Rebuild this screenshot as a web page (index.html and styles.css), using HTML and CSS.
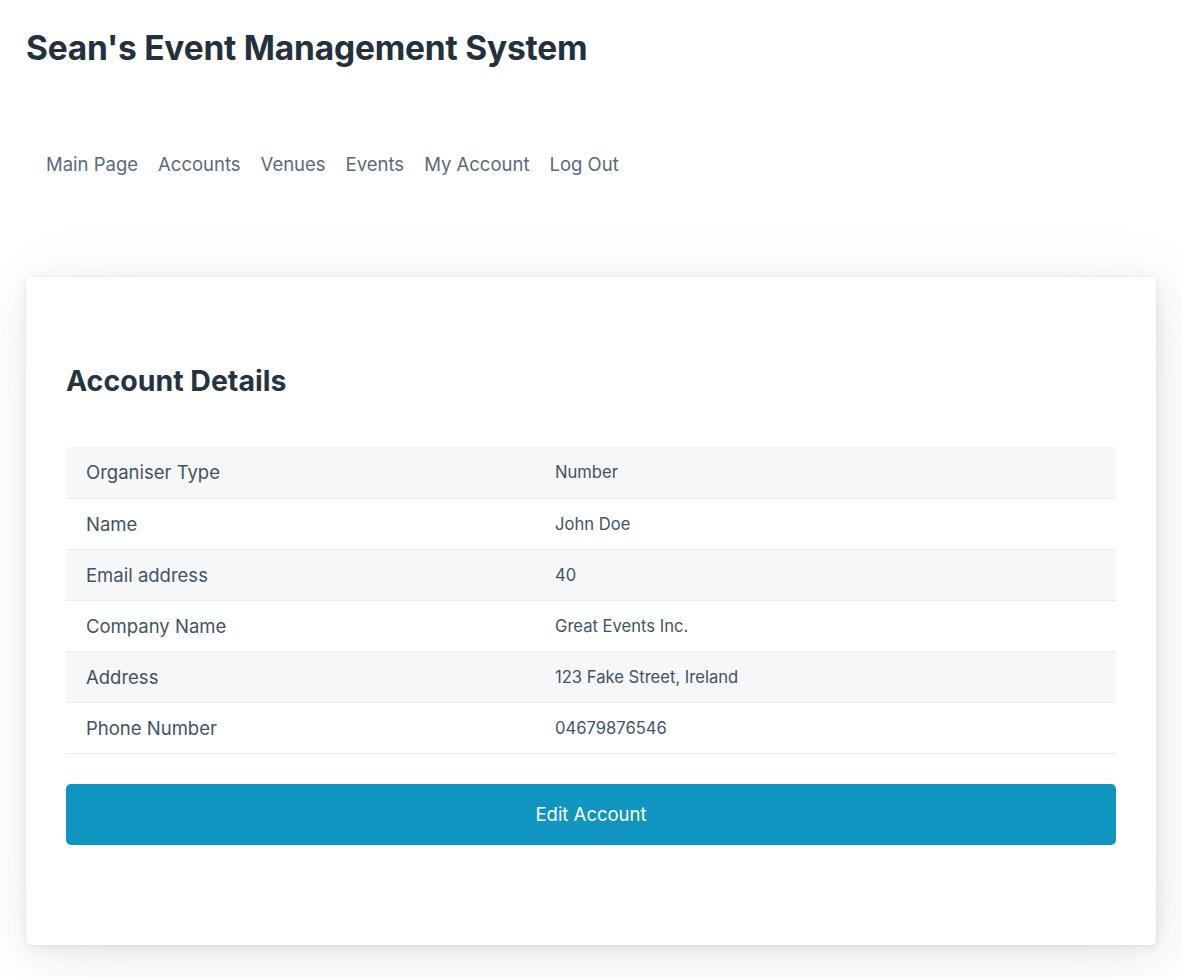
FILE: index.html
```html
<!DOCTYPE html>
<html lang="en">
<head>
<meta charset="utf-8">
<title>Sean's Event Management System</title>
<link rel="stylesheet" href="styles.css">
</head>
<body>
<header class="site-header">
  <h1 class="site-title">Sean's Event Management System</h1>
  <nav class="main-nav">
    <ul class="nav-list">
      <li><a class="nav-link" href="#">Main Page</a></li>
      <li><a class="nav-link" href="#">Accounts</a></li>
      <li><a class="nav-link" href="#">Venues</a></li>
      <li><a class="nav-link" href="#">Events</a></li>
      <li><a class="nav-link" href="#">My Account</a></li>
      <li><a class="nav-link" href="#">Log Out</a></li>
    </ul>
  </nav>
</header>
<main class="content">
  <article class="card">
    <h2 class="card-title">Account Details</h2>
    <table class="details">
      <tbody>
        <tr><td class="label">Organiser Type</td><td class="value">Number</td></tr>
        <tr><td class="label">Name</td><td class="value">John Doe</td></tr>
        <tr><td class="label">Email address</td><td class="value">40</td></tr>
        <tr><td class="label">Company Name</td><td class="value">Great Events Inc.</td></tr>
        <tr><td class="label">Address</td><td class="value">123 Fake Street, Ireland</td></tr>
        <tr><td class="label">Phone Number</td><td class="value">04679876546</td></tr>
      </tbody>
    </table>
    <a class="btn-primary" href="#">Edit Account</a>
  </article>
</main>
</body>
</html>
```
FILE: styles.css
```css
* { box-sizing: border-box; }
html, body { margin: 0; padding: 0; background: #fff; }
body {
  font-family: Inter, "Noto Sans", "Liberation Sans", sans-serif;
  color: #415462;
  font-size: 18.5px;
  -webkit-font-smoothing: antialiased;
}
.site-header { padding: 28px 26px 0; }
.site-title {
  margin: 0;
  font-size: 33.5px;
  line-height: 40px;
  font-weight: 700;
  color: #22313c;
  letter-spacing: -0.2px;
}
.main-nav { margin-top: 84px; padding-left: 20px; }
.nav-list { list-style: none; margin: 0; padding: 0; display: flex; gap: 20px; }
.nav-link {
  color: #596b78;
  text-decoration: none;
  font-size: 18.5px;
  line-height: 24px;
  display: block;
}
.content { padding: 101px 26px 33px; }
.card {
  background: #fff;
  border-radius: 5px;
  padding: 87px 40px 100px;
  box-shadow:
    0.0145rem 0.029rem 0.174rem rgba(27,40,50,0.017),
    0.0335rem 0.067rem 0.402rem rgba(27,40,50,0.024),
    0.0625rem 0.125rem 0.75rem rgba(27,40,50,0.03),
    0.1125rem 0.225rem 1.35rem rgba(27,40,50,0.036),
    0.2085rem 0.417rem 2.502rem rgba(27,40,50,0.043),
    0.5rem 1rem 6rem rgba(27,40,50,0.06),
    0 0 0 0.0625rem rgba(27,40,50,0.015);
}
.card-title {
  margin: 0 0 49px;
  font-size: 28.5px;
  line-height: 34px;
  font-weight: 700;
  color: #263440;
}
.details { width: 100%; border-collapse: collapse; }
.details tr:nth-child(odd) { background: #f6f7f9; }
.details td {
  border-bottom: 1px solid #e9ecef;
  height: 51px;
  padding: 0 20px;
  vertical-align: middle;
}
.label { width: 469px; font-size: 18.5px; color: #415462; }
.value { font-size: 16.6px; color: #415462; }
.btn-primary {
  display: block;
  margin-top: 30px;
  height: 61px;
  line-height: 61px;
  background: #1095c1;
  color: #fff;
  text-align: center;
  border-radius: 5px;
  text-decoration: none;
  font-size: 18.5px;
}
```
